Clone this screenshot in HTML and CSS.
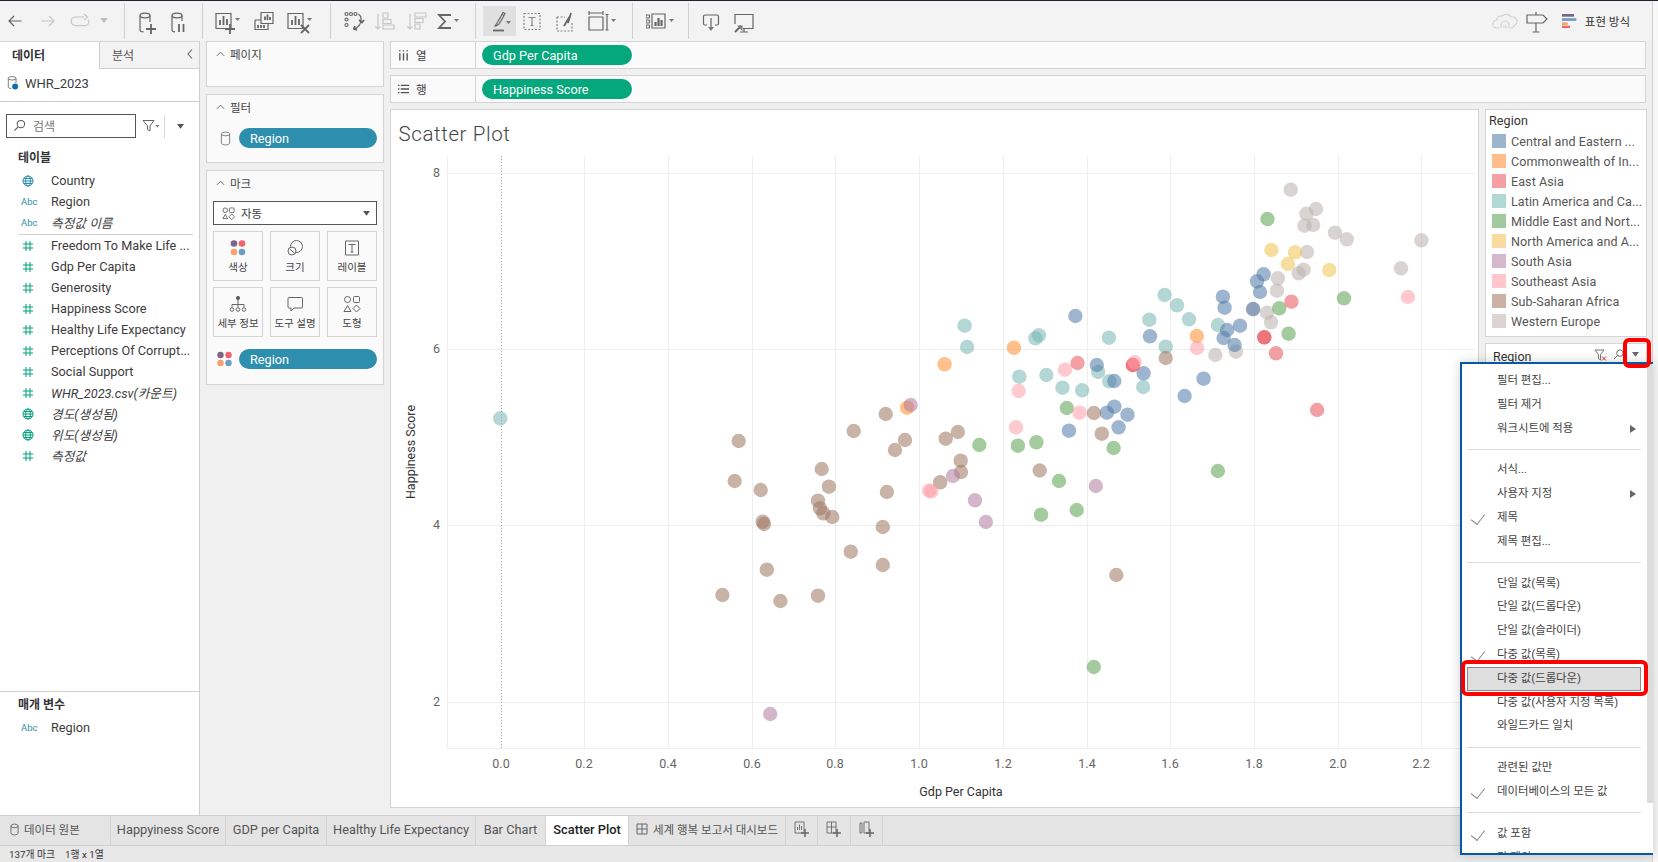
FILE: index.html
```html
<!DOCTYPE html>
<html lang="ko">
<head>
<meta charset="utf-8">
<title>Scatter Plot</title>
<link rel="stylesheet" href="styles.css">
</head>
<body>
<div class="app">
  <div class="topline"></div>
  <div class="toolbar">
    <svg class="ic" viewBox="0 0 28 28"><path d="M20.5 14H8M13 9l-5 5 5 5"/></svg>
    <svg class="ic off ml5" viewBox="0 0 28 28"><path d="M7.5 14H20M15 9l5 5-5 5"/></svg>
    <svg class="ic off ml4" viewBox="0 0 28 28"><path d="M18 10H9.5a4.2 4.2 0 0 0 0 8.6h10a3.6 3.6 0 0 0 2.5-6M18 7l3.500 3-3.500 3"/></svg>
    <svg class="caret off-fill ml4" viewBox="0 0 12 28"><path d="M2 11h8l-4 5z"/></svg>
    <div class="sep ml14"></div>
    <svg class="ic ml7" viewBox="0 0 28 28"><ellipse cx="13" cy="8.500" rx="5" ry="2.300"/><path d="M8 8.500V23c0 1 1.500 1.800 3.500 1.800M18 8.500V15"/><path class="bold" d="M19 17v10M14 22h10"/></svg>
    <svg class="ic ml4" viewBox="0 0 28 28"><ellipse cx="13" cy="8.500" rx="5" ry="2.300"/><path d="M8 8.500V23c0 1 1 1.800 3 1.800M18 8.500V14"/><path class="bold" d="M15 17v8M19.500 17v8"/></svg>
    <div class="sep ml10"></div>
    <svg class="ic ml9" viewBox="0 0 28 28"><path d="M4 6.500h15v15H4z"/><path class="bold" d="M8 18v-5M11.500 18V9M15 18v-6"/><path class="bold" d="M18 17v10M13 22h10"/><path class="solid" d="M23 11h5l-2.500 3z"/></svg>
    <svg class="ic ml10" viewBox="0 0 28 28"><path d="M11 5.500h12v11H11zM5 13h6M5 13v9.500h13V17"/><path class="bold" d="M15 13V9.500M17.500 13V7.500M20 13v-3M8 21v-3M11 21v-3M14 21v-3"/></svg>
    <svg class="ic ml8" viewBox="0 0 28 28"><path d="M2 6.500h15v15H2z"/><path class="bold" d="M6 18v-5M9.500 18V9M13 18v-6M15 18l8 8M23 18l-8 8"/><path class="solid" d="M21 11h5l-2.500 3z"/></svg>
    <div class="sep ml16"></div>
    <svg class="ic ml8" viewBox="0 0 28 28"><circle cx="7.500" cy="7" r="1.500"/><circle cx="12" cy="7" r="1.500"/><circle cx="16.500" cy="7" r="1.500"/><circle cx="7.500" cy="12.500" r="1.500"/><circle cx="7.500" cy="18" r="1.500"/><path d="M19.500 7c3 2 3.500 7 1 11l-3.500 3.500-3-.5"/><path class="bold" d="M20 13l3 2.500 2-2.500M16 19l-1 3 3 1"/></svg>
    <svg class="ic off ml3" viewBox="0 0 28 28"><path d="M8 7v15M5.500 19.500L8 22l2.500-2.500"/><path d="M13 6h5v5h-5zM13 12.500h8v4h-8zM13 18h11v4H13z"/></svg>
    <svg class="ic off ml4" viewBox="0 0 28 28"><path d="M8 7v15M5.500 19.500L8 22l2.500-2.500"/><path d="M13 6h11v4H13zM13 11.500h8v4h-8zM13 17h5v5h-5z"/></svg>
    <svg class="ic ml3" viewBox="0 0 28 28"><path class="bold" d="M18 8H6l6 6.500L6 21h12"/><path class="solid" d="M21 12h5l-2.500 3z"/></svg>
    <div class="sep ml14"></div>
    <div class="hl ml7"><svg class="ic" viewBox="0 0 28 28"><path d="M9 19l2-3 5-8.500 2 1-5 8.500-3 2zM16 7l1-1.500 2 1-1 1.500"/><path class="bold" d="M7 23.500h11"/><path class="solid" d="M20 14h5l-2.500 3z"/></svg></div>
    <svg class="ic dash ml2" viewBox="0 0 28 28"><path d="M6 6.500h16v16H6z"/><path class="plain" d="M10.500 10.500h7M14 10.500v8M12.500 18.500h3"/></svg>
    <svg class="ic ml5" viewBox="0 0 28 28"><path class="dashline" d="M6 10h8M6 10v14h15v-9"/><path class="bold" d="M13 19l6-10M17 16l3-10"/></svg>
    <svg class="ic ml9" viewBox="0 0 28 28"><path d="M1 6h14M1 4v4M15 4v4M1 10h14v13H1zM19 7.500V23M17.500 7.500h3M17.500 23h3"/><path class="solid" d="M23 12h5l-2.500 3z"/></svg>
    <div class="sep ml16"></div>
    <svg class="ic ml13" viewBox="0 0 28 28"><rect x="0" y="8" width="3.500" height="3" rx=".8"/><rect x="0" y="13" width="3.500" height="3" rx=".8"/><rect x="0" y="18" width="3.500" height="3" rx=".8"/><path d="M6 7h13v14H6z"/><path class="thick" d="M9.500 19v-4M12.500 19v-8M15.500 19v-6"/><path class="solid" d="M23 12h5l-2.500 3z"/></svg>
    <div class="sep ml14"></div>
    <svg class="ic ml8" viewBox="0 0 28 28"><path d="M10 18H8a1.500 1.500 0 0 1-1.500-1.500v-7A1.500 1.500 0 0 1 8 8h12a1.500 1.500 0 0 1 1.500 1.500v7A1.500 1.500 0 0 1 20 18h-2M14 11v10"/><path class="solid" d="M11 20h6l-3 4z"/></svg>
    <svg class="ic ml4" viewBox="0 0 28 28"><path d="M6 17v-9.500h18v14H14M15 21.500V25M11 25h8"/><path class="bold" d="M6 25l6-6"/><path class="solid" d="M8 18.500h5.500V24z"/></svg>
    <div class="tb-right">
      <svg class="ic faint" viewBox="0 0 28 28"><path d="M8 21H6a4 4 0 0 1-.5-8 5 5 0 0 1 5.500-4 6 6 0 0 1 9 1 4.500 4.500 0 0 1 3 8.500 3 3 0 0 1-3 2.500h-1M10 21v-3a4 4 0 0 1 8 0v3M13 21v-2.500M15 21v-2.500"/></svg>
      <svg class="ic ml3" viewBox="0 0 28 28"><path d="M14 5v3M14 16v9M10.500 25h7M5 8h16l4 4-4 4H5z"/></svg>
      <svg class="ic showme ml4" viewBox="0 0 28 28"><rect class="cp" x="8" y="14" width="12" height="2.700"/><rect class="cb" x="8" y="18.200" width="14.300" height="2.700"/><rect class="co" x="8" y="22.300" width="5.700" height="2.700"/><rect class="cr" x="8" y="25.700" width="8" height="2.700"/></svg>
      <span class="tb-text ml3">표현 방식</span>
    </div>
  </div>

  <div class="main">
    <aside class="data">
      <div class="dtabs">
        <div class="dtab on">데이터</div>
        <div class="dtab">분석<svg class="chev" viewBox="0 0 8 12"><path d="M6 1.500L2 6l4 4.500"/></svg></div>
      </div>
      <div class="dsrc">
        <svg class="dsic" viewBox="0 0 14 18"><ellipse cx="6" cy="3.500" rx="4.500" ry="2"/><path d="M1.500 3.500v10c0 1 1.500 2 3.500 2M10.500 3.500V9"/><circle class="fillb" cx="9.500" cy="13" r="3.500"/></svg>
        <span>WHR_2023</span>
      </div>
      <div class="searchrow">
        <div class="search">
          <svg class="sic" viewBox="0 0 14 14"><circle cx="8.500" cy="5.500" r="4"/><path d="M5.500 8.500L1.500 12.500"/></svg>
          <span>검색</span>
        </div>
        <svg class="funnel" viewBox="0 0 18 14"><path d="M1 1.500h11L8 7v5L5.500 10.500V7z"/><path class="solid" d="M13.500 6h4l-2 2.500z"/></svg>
        <div class="vline"></div>
        <svg class="tri" viewBox="0 0 10 8"><path d="M1 1h8L5 6.500z"/></svg>
      </div>
      <div class="dhead">테이블</div>
      <ul class="fields">
        <li><svg class="fic blue" viewBox="0 0 12 12"><circle cx="6" cy="6" r="5"/><ellipse cx="6" cy="6" rx="2.300" ry="5"/><path d="M1 6h10M1.800 3.500h8.400M1.800 8.500h8.400"/></svg><span>Country</span></li>
        <li><span class="abc">Abc</span><span>Region</span></li>
        <li class="div"><span class="abc">Abc</span><em>측정값 이름</em></li>
        <li><svg class="fic green" viewBox="0 0 12 12"><path d="M4 1v10M8 1v10M1 4h10M1 8h10"/></svg><span>Freedom To Make Life ...</span></li>
        <li><svg class="fic green" viewBox="0 0 12 12"><path d="M4 1v10M8 1v10M1 4h10M1 8h10"/></svg><span>Gdp Per Capita</span></li>
        <li><svg class="fic green" viewBox="0 0 12 12"><path d="M4 1v10M8 1v10M1 4h10M1 8h10"/></svg><span>Generosity</span></li>
        <li><svg class="fic green" viewBox="0 0 12 12"><path d="M4 1v10M8 1v10M1 4h10M1 8h10"/></svg><span>Happiness Score</span></li>
        <li><svg class="fic green" viewBox="0 0 12 12"><path d="M4 1v10M8 1v10M1 4h10M1 8h10"/></svg><span>Healthy Life Expectancy</span></li>
        <li><svg class="fic green" viewBox="0 0 12 12"><path d="M4 1v10M8 1v10M1 4h10M1 8h10"/></svg><span>Perceptions Of Corrupt...</span></li>
        <li><svg class="fic green" viewBox="0 0 12 12"><path d="M4 1v10M8 1v10M1 4h10M1 8h10"/></svg><span>Social Support</span></li>
        <li><svg class="fic green" viewBox="0 0 12 12"><path d="M4 1v10M8 1v10M1 4h10M1 8h10"/></svg><em>WHR_2023.csv(카운트)</em></li>
        <li><svg class="fic green" viewBox="0 0 12 12"><circle cx="6" cy="6" r="5"/><ellipse cx="6" cy="6" rx="2.300" ry="5"/><path d="M1 6h10M1.800 3.500h8.400M1.800 8.500h8.400"/></svg><em>경도(생성됨)</em></li>
        <li><svg class="fic green" viewBox="0 0 12 12"><circle cx="6" cy="6" r="5"/><ellipse cx="6" cy="6" rx="2.300" ry="5"/><path d="M1 6h10M1.800 3.500h8.400M1.800 8.500h8.400"/></svg><em>위도(생성됨)</em></li>
        <li><svg class="fic green" viewBox="0 0 12 12"><path d="M4 1v10M8 1v10M1 4h10M1 8h10"/></svg><em>측정값</em></li>
      </ul>
      <div class="params">
        <div class="dhead phead">매개 변수</div>
        <ul class="fields"><li><span class="abc">Abc</span><span>Region</span></li></ul>
      </div>
    </aside>

    <section class="cards">
      <div class="card c-pages"><div class="chead"><svg class="up" viewBox="0 0 10 6"><path d="M1 5l4-4 4 4"/></svg>페이지</div></div>
      <div class="card c-filter">
        <div class="chead"><svg class="up" viewBox="0 0 10 6"><path d="M1 5l4-4 4 4"/></svg>필터</div>
        <div class="pillrow">
          <svg class="cyl" viewBox="0 0 12 16"><ellipse cx="6" cy="3" rx="4.500" ry="2"/><path d="M1.500 3v10c0 1 2 2 4.500 2s4.500-1 4.500-2V3"/></svg>
          <div class="pill bluep">Region</div>
        </div>
      </div>
      <div class="card c-marks">
        <div class="chead"><svg class="up" viewBox="0 0 10 6"><path d="M1 5l4-4 4 4"/></svg>마크</div>
        <div class="select">
          <svg class="shapes" viewBox="0 0 14 14"><circle cx="3.500" cy="3.500" r="2.500"/><rect x="8" y="1" width="5" height="5" rx="1"/><path d="M3.500 8L6 12.500H1zM10.500 7.500l3 3-3 3-3-3z"/></svg>
          <span>자동</span>
          <svg class="tri" viewBox="0 0 10 8"><path d="M1 1h8L5 6.500z"/></svg>
        </div>
        <div class="mgrid">
          <div class="mbtn"><svg class="mic" viewBox="0 0 18 18"><circle class="cp" cx="5" cy="4.500" r="3.300"/><circle class="cr" cx="13" cy="4.500" r="3.300"/><circle class="co" cx="5" cy="13" r="3.300"/><circle class="cb" cx="13" cy="13" r="3.300"/></svg><span>색상</span></div>
          <div class="mbtn"><svg class="mic line" viewBox="0 0 18 18"><circle cx="10.500" cy="7.500" r="6"/><circle class="wf" cx="6" cy="12" r="4"/><path d="M3.500 9.500l5 5"/></svg><span>크기</span></div>
          <div class="mbtn"><svg class="mic line" viewBox="0 0 18 18"><path d="M2.500 2h13v14h-13z"/><path d="M5.500 5.500h7M9 5.500v7.500M7.500 13h3"/></svg><span>레이블</span></div>
          <div class="mbtn"><svg class="mic tree" viewBox="0 0 18 18"><circle class="fd" cx="9" cy="3" r="2"/><path d="M9 5v4M3 12V9.500h12V12M9 9v3"/><circle cx="3" cy="14.500" r="1.800"/><circle cx="9" cy="14.500" r="1.800"/><circle cx="15" cy="14.500" r="1.800"/></svg><span>세부 정보</span></div>
          <div class="mbtn"><svg class="mic line" viewBox="0 0 18 18"><path d="M3 2.500h12.500a1 1 0 0 1 1 1v8.500a1 1 0 0 1-1 1H8l-3 3v-3H3a1 1 0 0 1-1-1V3.500a1 1 0 0 1 1-1z"/></svg><span>도구 설명</span></div>
          <div class="mbtn"><svg class="mic line" viewBox="0 0 18 18"><circle cx="4.500" cy="4.500" r="3"/><rect x="10.500" y="1.500" width="6" height="6" rx="1"/><path d="M4.500 10.500L8 16.500H1zM13.500 10l3.500 3.500-3.500 3.500-3.500-3.500z"/></svg><span>도형</span></div>
        </div>
        <div class="pillrow colorrow">
          <svg class="dots" viewBox="0 0 16 16"><circle class="cp" cx="4" cy="4" r="3.200"/><circle class="cr" cx="12" cy="4" r="3.200"/><circle class="co" cx="4" cy="12" r="3.200"/><circle class="cb" cx="12" cy="12" r="3.200"/></svg>
          <div class="pill bluep">Region</div>
        </div>
      </div>
    </section>

    <section class="content">
      <div class="shelf">
        <div class="slabel"><svg class="sh" viewBox="0 0 12 12"><path d="M2 4v8M6 4v8M10 4v8M2 .8v1.400M6 .8v1.400M10 .8v1.400"/></svg>열</div>
        <div class="pill greenp">Gdp Per Capita</div>
      </div>
      <div class="shelf">
        <div class="slabel"><svg class="sh" viewBox="0 0 12 12"><path d="M3 2h9M3 6h9M3 10h9M0 2h1.500M0 6h1.500M0 10h1.500"/></svg>행</div>
        <div class="pill greenp">Happiness Score</div>
      </div>
      <div class="work">
        <div class="sheet">
          <svg class="plot" viewBox="391 110 1087 697" width="1087" height="697">
            <text class="title" x="398.500" y="141">Scatter Plot</text>
            <g class="grid">
              <path d="M447.500 156V748M584.500 156V748M668.500 156V748M752.500 156V748M835.500 156V748M919.500 156V748M1003.500 156V748M1087.500 156V748M1170.500 156V748M1254.500 156V748M1338.500 156V748M1421.500 156V748"/>
              <path d="M447 173.500H1475M447 349.500H1475M447 525.500H1475M447 702.500H1475M447 748.500H1475"/>
            </g>
            <path class="zero" d="M501.500 156V748"/>
            <g class="ylab">
              <text x="440" y="177">8</text><text x="440" y="353">6</text><text x="440" y="529">4</text><text x="440" y="706">2</text>
            </g>
            <g class="xlab">
              <text x="501" y="768">0.0</text><text x="584" y="768">0.2</text><text x="668" y="768">0.4</text><text x="752" y="768">0.6</text><text x="835" y="768">0.8</text><text x="919" y="768">1.0</text><text x="1003" y="768">1.2</text><text x="1087" y="768">1.4</text><text x="1170" y="768">1.6</text><text x="1254" y="768">1.8</text><text x="1338" y="768">2.0</text><text x="1421" y="768">2.2</text>
            </g>
            <text class="axt" x="961" y="796">Gdp Per Capita</text>
            <text class="axt" transform="translate(415 452) rotate(-90)">Happiness Score</text>
            <g class="pts p-gray">
              <circle cx="1290.700" cy="189.700"/><circle cx="1316" cy="209"/><circle cx="1306.400" cy="213.700"/><circle cx="1304.600" cy="225.700"/><circle cx="1313.200" cy="225"/><circle cx="1335" cy="232.700"/><circle cx="1346.800" cy="239.300"/><circle cx="1421.400" cy="240.300"/><circle cx="1307" cy="252"/><circle cx="1303.600" cy="269.700"/><circle cx="1298.600" cy="273.300"/><circle cx="1401" cy="268.300"/><circle cx="1277.900" cy="278.300"/><circle cx="1277" cy="290.700"/><circle cx="1252.900" cy="309.300"/><circle cx="1267" cy="312.700"/><circle cx="1271" cy="322.300"/><circle cx="1215.400" cy="355"/><circle cx="1236" cy="351.700"/>
            </g>
            <g class="pts p-yellow">
              <circle cx="1271.400" cy="250"/><circle cx="1295" cy="252.300"/><circle cx="1287.900" cy="264"/><circle cx="1329.300" cy="270"/>
            </g>
            <g class="pts p-teal">
              <circle cx="500.300" cy="418.300"/><circle cx="1164.600" cy="295"/><circle cx="1177" cy="305.300"/><circle cx="1189" cy="319.300"/><circle cx="1217.900" cy="325"/><circle cx="1149.300" cy="319.700"/><circle cx="1108.900" cy="337.700"/><circle cx="1165.700" cy="346.700"/><circle cx="964.600" cy="325.700"/><circle cx="967.100" cy="347"/><circle cx="1035.400" cy="338.300"/><circle cx="1038.900" cy="335.300"/><circle cx="1019.300" cy="376.700"/><circle cx="1046.400" cy="375"/><circle cx="1062.500" cy="387.700"/><circle cx="1082.100" cy="390.300"/><circle cx="1098.200" cy="372"/><circle cx="1109.300" cy="381.300"/><circle cx="1143.200" cy="387"/>
            </g>
            <g class="pts p-blue">
              <circle cx="1263.600" cy="274.300"/><circle cx="1257" cy="281.300"/><circle cx="1260" cy="292"/><circle cx="1222.900" cy="296.700"/><circle cx="1224.600" cy="307.700"/><circle cx="1253.200" cy="309"/><circle cx="1240" cy="325.700"/><circle cx="1227.100" cy="330"/><circle cx="1223.600" cy="338"/><circle cx="1234.600" cy="345"/><circle cx="1075.400" cy="316"/><circle cx="1150" cy="336.300"/><circle cx="1096.800" cy="365"/><circle cx="1143.600" cy="373.300"/><circle cx="1114.300" cy="381"/><circle cx="1203.600" cy="378.700"/><circle cx="1184.600" cy="396"/><circle cx="1114.300" cy="406.700"/><circle cx="1106.800" cy="412.700"/><circle cx="1127.500" cy="414.700"/><circle cx="1118.600" cy="427.300"/><circle cx="1068.900" cy="430.700"/>
            </g>
            <g class="pts p-brown">
              <circle cx="1165.700" cy="358"/><circle cx="1093.900" cy="413"/><circle cx="1101.800" cy="433.700"/><circle cx="905" cy="440"/><circle cx="945.700" cy="438.700"/><circle cx="957.900" cy="432"/><circle cx="960.700" cy="460.700"/><circle cx="961" cy="472"/><circle cx="1039.700" cy="470.500"/><circle cx="738.700" cy="441"/><circle cx="821.700" cy="469"/><circle cx="853.700" cy="431"/><circle cx="885.700" cy="414"/><circle cx="895" cy="450"/><circle cx="734.700" cy="481"/><circle cx="760.700" cy="490"/><circle cx="828.900" cy="486.700"/><circle cx="886.900" cy="492"/><circle cx="818" cy="500.700"/><circle cx="820" cy="508.300"/><circle cx="823.400" cy="513.300"/><circle cx="832.300" cy="517"/><circle cx="762.700" cy="521.700"/><circle cx="764" cy="524"/><circle cx="882.800" cy="527"/><circle cx="850.700" cy="551.700"/><circle cx="882.800" cy="565"/><circle cx="766.800" cy="569.700"/><circle cx="1116.300" cy="575"/><circle cx="722.400" cy="595"/><circle cx="780.400" cy="601"/><circle cx="818" cy="595.700"/><circle cx="940.200" cy="482.300"/>
            </g>
            <g class="pts p-green">
              <circle cx="1267.500" cy="219"/><circle cx="1279.300" cy="308.300"/><circle cx="1288.600" cy="333.700"/><circle cx="1344" cy="298.300"/><circle cx="1066.800" cy="408"/><circle cx="1113.600" cy="448"/><circle cx="1036.400" cy="442.300"/><circle cx="1017.900" cy="445.700"/><circle cx="979.300" cy="445"/><circle cx="1217.900" cy="471"/><circle cx="1059" cy="481"/><circle cx="1041" cy="514.700"/><circle cx="1076.700" cy="510"/><circle cx="1093.800" cy="667"/>
            </g>
            <g class="pts p-orange">
              <circle cx="1196.800" cy="336"/><circle cx="1013.900" cy="347.700"/><circle cx="944.600" cy="364.300"/><circle cx="907.100" cy="407.700"/>
            </g>
            <g class="pts p-red">
              <circle cx="1291.400" cy="301.700"/><circle cx="1264.300" cy="337.300"/><circle cx="1264.300" cy="337.300"/><circle cx="1276" cy="353.300"/><circle cx="1317.100" cy="410"/><circle cx="1077.500" cy="363"/><circle cx="1132.900" cy="365"/><circle cx="1132.900" cy="365"/>
            </g>
            <g class="pts p-pink">
              <circle cx="1407.900" cy="297"/><circle cx="1197.100" cy="348"/><circle cx="1065" cy="369.700"/><circle cx="1018.600" cy="391"/><circle cx="1079.600" cy="412.700"/><circle cx="1016" cy="427.300"/><circle cx="1134.600" cy="362.300"/><circle cx="931.300" cy="491.300"/><circle cx="929.200" cy="490.700"/>
            </g>
            <g class="pts p-purple">
              <circle cx="910.700" cy="405"/><circle cx="953" cy="476"/><circle cx="1095.800" cy="486"/><circle cx="975" cy="500.300"/><circle cx="985.900" cy="522"/><circle cx="770.200" cy="714"/>
            </g>
          </svg>
        </div>
        <div class="side">
          <div class="legend">
            <div class="ltitle">Region</div>
            <div class="lrow"><i class="sw s-blue"></i>Central and Eastern ...</div>
            <div class="lrow"><i class="sw s-orange"></i>Commonwealth of In...</div>
            <div class="lrow"><i class="sw s-red"></i>East Asia</div>
            <div class="lrow"><i class="sw s-teal"></i>Latin America and Ca...</div>
            <div class="lrow"><i class="sw s-green"></i>Middle East and Nort...</div>
            <div class="lrow"><i class="sw s-yellow"></i>North America and A...</div>
            <div class="lrow"><i class="sw s-purple"></i>South Asia</div>
            <div class="lrow"><i class="sw s-pink"></i>Southeast Asia</div>
            <div class="lrow"><i class="sw s-brown"></i>Sub-Saharan Africa</div>
            <div class="lrow"><i class="sw s-gray"></i>Western Europe</div>
          </div>
          <div class="fcard">
            <span class="ftitle">Region</span>
            <svg class="fx" viewBox="0 0 13 12"><path class="g" d="M1 1h9L6.500 5.500V11L4.500 9.500v-4z"/><path class="r" d="M8 7.500l4 4M12 7.500l-4 4"/></svg>
            <svg class="fs" viewBox="0 0 12 12"><circle cx="7.500" cy="4.500" r="3.500"/><path d="M5 7l-4 4"/></svg>
            <svg class="farrow" viewBox="0 0 10 8"><path d="M1 1h8L5 6.500z"/></svg>
          </div>
        </div>
      </div>
    </section>
  </div>

  <div class="tabs">
    <div class="tab first"><svg class="tcyl" viewBox="0 0 10 14"><ellipse cx="5" cy="3" rx="4" ry="2"/><path d="M1 3v8c0 1 2 2 4 2s4-1 4-2V3"/></svg>데이터 원본</div>
    <div class="tab">Happyiness Score</div>
    <div class="tab">GDP per Capita</div>
    <div class="tab">Healthy Life Expectancy</div>
    <div class="tab">Bar Chart</div>
    <div class="tab active">Scatter Plot</div>
    <div class="tab"><svg class="tdash" viewBox="0 0 12 12"><path d="M1 1h10v10H1zM1 6h10M6 1v10"/></svg>세계 행복 보고서 대시보드</div>
    <div class="tab"><svg class="tplus" viewBox="0 0 16 16"><path d="M1 1h9v11H1z"/><path d="M3.500 9V6M5.500 9V3.500M7.500 9V5"/><path class="b" d="M11 8v8M7 12h8"/></svg></div>
    <div class="tab"><svg class="tplus" viewBox="0 0 16 16"><path d="M1 1h9v11H1zM1 6h9M5.500 1v11"/><path class="b" d="M11 8v8M7 12h8"/></svg></div>
    <div class="tab"><svg class="tplus" viewBox="0 0 16 16"><path d="M3 2H1v10h2zM5 1h5v11H5z"/><path class="b" d="M11 8v8M7 12h8"/></svg></div>
    <div class="tab last"></div>
  </div>
  <div class="status"><span>137개 마크</span><span>1행 x 1열</span></div>

  <div class="menu">
    <div class="scroll"></div>
    <div class="mi">필터 편집...</div>
    <div class="mi">필터 제거</div>
    <div class="mi sub">워크시트에 적용</div>
    <div class="ms"></div>
    <div class="mi">서식...</div>
    <div class="mi sub">사용자 지정</div>
    <div class="mi chk">제목</div>
    <div class="mi">제목 편집...</div>
    <div class="ms"></div>
    <div class="mi">단일 값(목록)</div>
    <div class="mi">단일 값(드롭다운)</div>
    <div class="mi">단일 값(슬라이더)</div>
    <div class="mi chk">다중 값(목록)</div>
    <div class="mi sel">다중 값(드롭다운)</div>
    <div class="mi">다중 값(사용자 지정 목록)</div>
    <div class="mi">와일드카드 일치</div>
    <div class="ms"></div>
    <div class="mi">관련된 값만</div>
    <div class="mi chk">데이터베이스의 모든 값</div>
    <div class="ms"></div>
    <div class="mi chk">값 포함</div>
    <div class="mi">값 제외</div>
  </div>
  <div class="redbox r1"></div>
  <div class="redbox r2"></div>
</div>
</body>
</html>
```
FILE: styles.css
```css
* { box-sizing: border-box; }
html, body { margin: 0; padding: 0; }
body {
  width: 1658px; height: 862px; overflow: hidden; background: #f7f7f7;
  font-family: Roboto, "Noto Sans CJK KR", sans-serif; font-size: 12.700px; color: #3c3c3c;
}
ul { list-style: none; margin: 0; padding: 0; }
em { font-style: italic; }
svg { display: block; flex: none; }

.app { position: relative; width: 1653px; height: 862px; display: flex; flex-direction: column; border-right: 1px solid #cfcfcf; }
.topline { height: 1px; width: 1658px; background: #1e2430; flex: none; }

/* toolbar */
.toolbar { height: 40px; flex: none; display: flex; align-items: center; background: #f3f3f3; padding-left: 1px; }
.ic { width: 28px; height: 28px; fill: none; stroke: #666; stroke-width: 1.200; }
.ic .bold { stroke-width: 1.800; }
.ic .thick { stroke-width: 2.200; }
.ic .solid { fill: #777; stroke: none; }
.ic .plain { stroke-dasharray: none; }
.ic .dashline { stroke-dasharray: 2 1.500; stroke: #888; }
.ic.off { stroke: #c6c6c6; }
.ic.dash { stroke: #888; stroke-dasharray: 2 1.500; }
.ic.faint { stroke: #d0d0d0; }
.caret { width: 12px; height: 28px; }
.off-fill { fill: #bdbdbd; }
.sep { width: 1px; height: 36px; background: #d0d0d0; flex: none; }
.hl { width: 33px; height: 30px; background: #e0e0e0; display: flex; align-items: center; justify-content: center; }
.tb-right { margin-left: auto; display: flex; align-items: center; padding-right: 22px; }
.tb-text { font-size: 11.500px; color: #333; }
.showme { stroke: none; margin-top: -14px; }
.ml2 { margin-left: 2px; } .ml3 { margin-left: 3px; } .ml4 { margin-left: 4px; } .ml5 { margin-left: 5px; }
.ml7 { margin-left: 7px; } .ml8 { margin-left: 8px; } .ml9 { margin-left: 9px; } .ml10 { margin-left: 10px; }
.ml13 { margin-left: 13px; } .ml14 { margin-left: 14px; } .ml16 { margin-left: 16px; }
.cp { fill: #7b6589; } .cb { fill: #6f9cc4; } .co { fill: #f9a06e; } .cr { fill: #f4606d; }

/* layout */
.main { flex: 1; display: flex; min-height: 0; background: #f0f0f0; }

/* data pane */
.data { width: 200px; flex: none; background: #fff; border-right: 1px solid #cfcfcf; border-top: 1px solid #d4d4d4; display: flex; flex-direction: column; }
.dtabs { height: 27px; display: grid; grid-template-columns: 99px 1fr; flex: none; }
.dtab { display: flex; align-items: center; font-size: 12px; padding-bottom: 2px; }
.dtab.on { padding-left: 12px; font-weight: 700; color: #333; }
.dtab:not(.on) { background: #f3f3f3; border-left: 1px solid #cfcfcf; border-bottom: 1px solid #cfcfcf; padding-left: 12px; color: #555; justify-content: space-between; padding-right: 5px; }
.chev { width: 8px; height: 12px; fill: none; stroke: #666; stroke-width: 1.100; }
.dsrc { height: 33px; flex: none; display: flex; align-items: center; gap: 6px; padding-left: 7px; padding-bottom: 4px; border-bottom: 1px solid #cfcfcf; font-size: 13px; }
.dsic { width: 12px; height: 16px; fill: none; stroke: #666; stroke-width: 1; }
.dsic .fillb { fill: #0f6fa8; stroke: none; }
.searchrow { display: flex; align-items: center; margin-top: 12px; padding-left: 6px; flex: none; }
.search { width: 130px; height: 24px; border: 1px solid #555; display: flex; align-items: center; padding: 0 0 2px 6px; gap: 7px; font-size: 12px; color: #777; }
.sic { width: 13px; height: 13px; fill: none; stroke: #555; stroke-width: 1.100; }
.funnel { width: 18px; height: 14px; margin-left: 6px; fill: none; stroke: #666; }
.funnel .solid { fill: #777; stroke: none; }
.vline { width: 1px; height: 23px; background: #d8d8d8; margin-left: 4px; }
.tri { width: 9px; height: 7px; fill: #555; margin-left: 11px; }
.dhead { font-weight: 700; font-size: 12px; padding-left: 18px; margin-top: 10px; height: 22px; line-height: 20px; color: #333; flex: none; }
.fields { flex: 1; }
.fields li { height: 21px; display: flex; align-items: center; padding-left: 21px; white-space: nowrap; }
.fields li.div { height: 23px; padding-bottom: 2px; position: relative; }
.fields li.div::after { content: ""; position: absolute; left: 18px; right: 6px; bottom: 0; height: 1px; background: #d0d0d0; }
.fic { width: 12px; height: 12px; fill: none; stroke-width: 1; margin-left: 1px; margin-right: 17px; }
.fic.blue { stroke: #2d8fad; }
.fic.green { stroke: #00a278; }
.abc { width: 30px; font-size: 9.500px; color: #2d8fad; flex: none; }
.params { height: 124px; flex: none; border-top: 1px solid #cfcfcf; }
.phead { margin-top: 3px; margin-bottom: 0; }

/* cards */
.cards { width: 190px; flex: none; padding: 0 6px; display: flex; flex-direction: column; gap: 7px; }
.card { background: #fafafa; border: 1px solid #d4d4d4; flex: none; }
.c-pages { height: 46px; }
.c-filter { height: 69px; }
.c-marks { height: 215px; }
.chead { display: flex; align-items: center; gap: 5px; height: 23px; padding-left: 9px; font-size: 11.500px; color: #444; }
.up { width: 9px; height: 6px; fill: none; stroke: #666; stroke-width: 1.100; }
.pillrow { display: flex; align-items: center; padding-left: 13px; margin-top: 10px; }
.cyl { width: 11px; height: 15px; fill: none; stroke: #777; stroke-width: 1; margin-right: 8px; }
.dots { width: 17px; height: 16px; margin-right: 6px; margin-left: -4px; }
.pill { height: 20px; border-radius: 10px; color: #fff; padding-left: 11px; line-height: 21px; font-size: 12.700px; flex: none; width: 138px; }
.bluep { background: #2d8fad; }
.greenp { background: #05a87c; width: 150px; }
.select { margin: 7px 6px 0; height: 24px; background: #fff; border: 1px solid #555; display: flex; align-items: center; padding-left: 8px; gap: 6px; font-size: 11.500px; position: relative; }
.select .tri { margin-left: auto; margin-right: 5px; }
.shapes { width: 13px; height: 13px; fill: none; stroke: #666; stroke-width: 1; }
.mgrid { display: grid; grid-template-columns: repeat(3, 50px); grid-auto-rows: 50px; column-gap: 7px; row-gap: 6px; margin: 6px 6px 0; }
.mbtn { border: 1px solid #d4d4d4; display: flex; flex-direction: column; align-items: center; padding-top: 7px; gap: 2px; font-size: 10.500px; color: #444; white-space: nowrap; background: #fafafa; }
.mic { width: 18px; height: 18px; }
.mic.line { fill: none; stroke: #666; stroke-width: 1; }
.mic.line .wf { fill: #fafafa; }
.mic.tree { fill: none; stroke: #666; stroke-width: 1; }
.mic.tree .fd { fill: #555; stroke: none; }
.colorrow { margin-top: 12px; }

/* shelves + sheet */
.content { flex: 1; min-width: 0; padding: 0 6px 7px 0; display: flex; flex-direction: column; gap: 6px; }
.shelf { height: 28px; flex: none; background: #fafafa; border: 1px solid #d4d4d4; display: flex; align-items: center; }
.slabel { width: 85px; height: 100%; display: flex; align-items: center; gap: 7px; padding-left: 7px; border-right: 1px solid #d4d4d4; font-size: 11.500px; margin-right: 6px; }
.sh { width: 11px; height: 12px; fill: none; stroke: #555; stroke-width: 1.500; }
.work { flex: 1; min-height: 0; display: flex; gap: 6px; }
.sheet { width: 1089px; flex: none; background: #fff; border: 1px solid #d4d4d4; }
.plot { display: block; }
.title { font-size: 20.500px; font-weight: 300; fill: #444; font-family: Roboto, sans-serif; letter-spacing: .6px; }
.grid path { fill: none; stroke: #eeeeee; stroke-width: 1; }
.zero { fill: none; stroke: #a8a8a8; stroke-width: 1; stroke-dasharray: 1 2; }
.ylab text { font-size: 12.500px; fill: #666; text-anchor: end; }
.xlab text { font-size: 12.500px; fill: #666; text-anchor: middle; }
.axt { font-size: 12.500px; fill: #333; text-anchor: middle; }
.pts circle { r: 7.200px; }
.pts { fill-opacity: .55; }
.p-blue { fill: #4e79a7; } .p-orange { fill: #ff8c2b; } .p-red { fill: #e9525a; } .p-teal { fill: #76b7b2; }
.p-green { fill: #59a14f; } .p-yellow { fill: #f1c350; } .p-purple { fill: #b07aa1; } .p-pink { fill: #ff9da7; }
.p-brown { fill: #9c755f; } .p-gray { fill: #bab0ac; }

.side { width: 162px; flex: none; display: flex; flex-direction: column; gap: 6px; }
.legend { height: 228px; flex: none; background: #fff; border: 1px solid #d4d4d4; padding: 3px 0 0 3px; font-size: 12.500px; letter-spacing: .1px; }
.ltitle { height: 18px; line-height: 16px; color: #333; }
.lrow { height: 20px; display: flex; align-items: center; gap: 5px; padding-left: 3px; color: #555; white-space: nowrap; }
.sw { width: 14px; height: 14px; flex: none; }
.s-blue { background: #9db5cc; } .s-orange { background: #ffbd8b; } .s-red { background: #f5a1a4; } .s-teal { background: #b0d8d5; }
.s-green { background: #a2c9a0; } .s-yellow { background: #f8dc9f; } .s-purple { background: #d6b8cd; } .s-pink { background: #ffc6cc; }
.s-brown { background: #cbb2a5; } .s-gray { background: #dbd4d2; }
.fcard { flex: 1; background: #fff; border: 1px solid #d4d4d4; display: flex; align-items: flex-start; padding: 5px 6px 0 7px; position: relative; }
.ftitle { font-size: 12.500px; color: #333; margin-right: auto; }
.fx { width: 13px; height: 12px; fill: none; margin: 0 3px 0 0; }
.fx .g { stroke: #666; stroke-width: .9; }
.fx .r { stroke: #e02020; stroke-width: 1; }
.fs { width: 11px; height: 11px; fill: none; stroke: #666; margin-left: 3px; margin-right: 7px; }
.farrow { width: 9px; height: 7px; fill: #666; margin-top: 2px; }

/* tabs + status */
.tabs { height: 30px; flex: none; display: grid; grid-template-columns: 111px 115px 101px 149px 70px 83px 157px 32px 33px 32px 1fr; background: #e4e4e4; border-top: 1px solid #cfcfcf; }
.tab { display: flex; align-items: center; justify-content: center; border-right: 1px solid #d2d2d2; font-size: 12.800px; color: #555; white-space: nowrap; gap: 5px; padding-bottom: 3px; }
.tab.first { font-size: 11.500px; justify-content: flex-start; padding-left: 10px; }
.tab.active { background: #fff; color: #222; font-weight: 500; }
.tab.last { border-right: 0; }
.tcyl { width: 9px; height: 13px; fill: none; stroke: #666; }
.tdash { width: 12px; height: 12px; fill: none; stroke: #666; }
.tab:nth-child(7) { font-size: 11.500px; }
.tplus { width: 16px; height: 16px; fill: none; stroke: #666; stroke-width: .9; }
.tplus .b { stroke-width: 1.500; }
.status { height: 17px; flex: none; background: #e8e8e8; border-top: 1px solid #cfcfcf; display: flex; align-items: center; gap: 10px; padding-left: 9px; font-size: 9.800px; color: #333; }

/* menu */
.menu { position: absolute; left: 1460px; top: 362px; width: 193px; height: 493px; background: #fff; border: 2px solid #0659a5; border-right: 0; padding-top: 5px; overflow: hidden; box-shadow: 0 0 10px rgba(0,0,0,.18); font-size: 11.400px; color: #444; }
.scroll { position: absolute; right: 0; top: 0; width: 6px; height: 439px; background: #dcdcdc; }
.mi { height: 23.800px; line-height: 23.800px; margin: 0 12px 0 5px; padding-left: 30px; position: relative; white-space: nowrap; }
.mi.sub::after { content: ""; position: absolute; right: 5px; top: 8px; border-left: 6px solid #666; border-top: 4px solid transparent; border-bottom: 4px solid transparent; }
.mi.chk::before { content: ""; position: absolute; left: 7px; top: 5px; width: 7px; height: 12px; border-right: 1px solid #888; border-bottom: 1px solid #888; transform: rotate(38deg); }
.mi.sel { background: #dedede; box-shadow: inset 0 0 0 1px #8a8a8a; }
.ms { height: 1px; margin: 8.500px 12px 8.500px 5px; background: #ddd; }
.redbox { position: absolute; border: 4px solid #fe0000; border-radius: 6px; }
.r1 { left: 1623px; top: 338px; width: 28px; height: 30px; }
.r2 { left: 1461px; top: 660px; width: 187px; height: 36px; }
```
